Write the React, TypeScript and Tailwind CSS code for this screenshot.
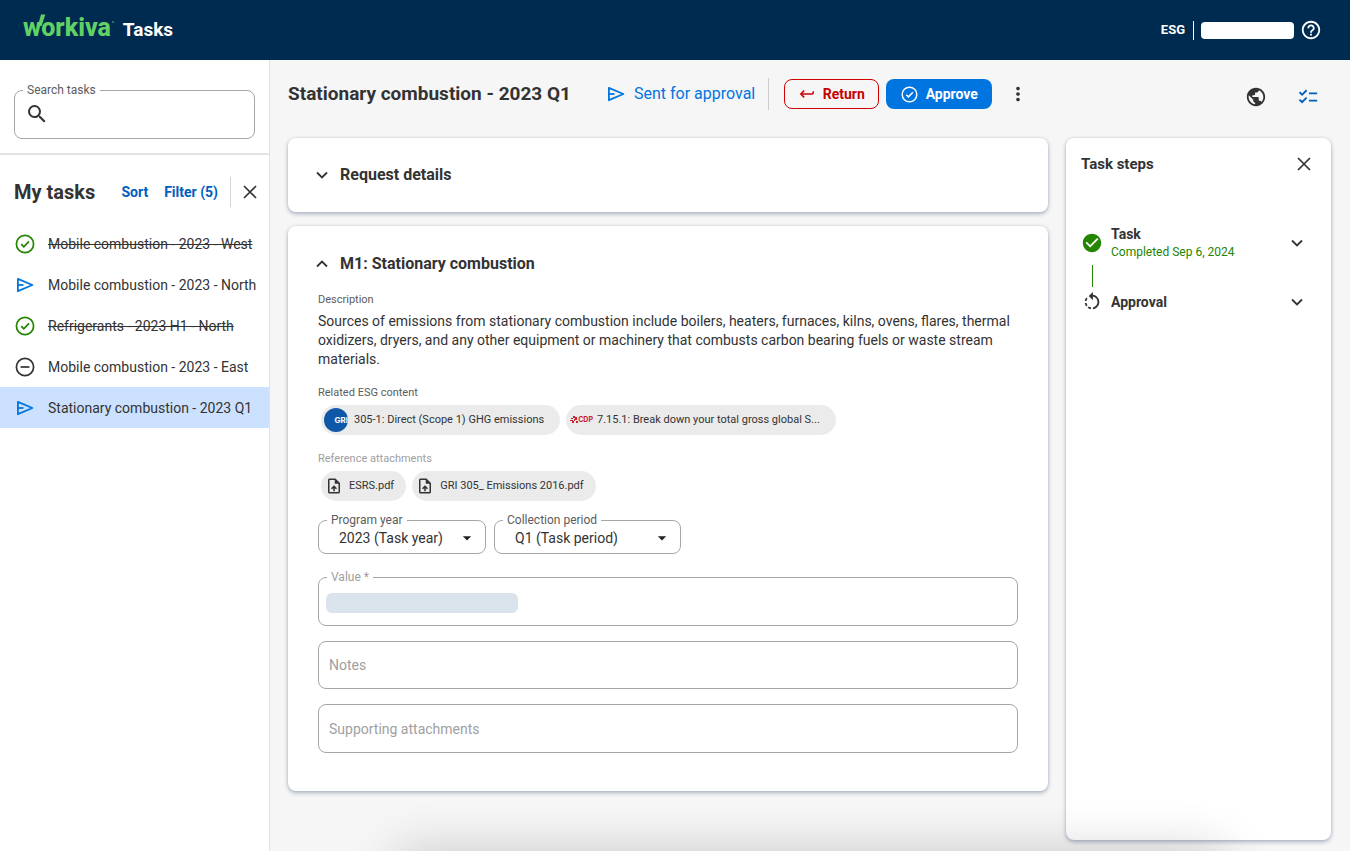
import classNames from "clsx";
import { type FC, type ReactNode, useState } from "react";
import {
	MdArrowDropDown,
	MdCheckCircle,
	MdChecklist,
	MdHelpOutline,
	MdMoreVert,
	MdPublic,
	MdRotateLeft,
	MdSearch,
	MdUploadFile,
} from "react-icons/md";

type Status = "DONE" | "SENT" | "SKIPPED";

type Task = {
	id: number;
	title: string;
	status: Status;
};

const tasks: Task[] = [
	{ id: 1, title: "Mobile combustion - 2023 - West", status: "DONE" },
	{ id: 2, title: "Mobile combustion - 2023 - North", status: "SENT" },
	{ id: 3, title: "Refrigerants - 2023 H1 - North", status: "DONE" },
	{ id: 4, title: "Mobile combustion - 2023 - East", status: "SKIPPED" },
	{ id: 5, title: "Stationary combustion - 2023 Q1", status: "SENT" },
];

const attachments = ["ESRS.pdf", "GRI 305_ Emissions 2016.pdf"];

type IconProps = { className?: string };

const CheckCircleIcon: FC<IconProps> = ({ className }) => (
	<svg viewBox="0 0 20 20" fill="none" stroke="currentColor" className={className} aria-hidden="true">
		<circle cx="10" cy="10" r="8.6" strokeWidth="1.7" />
		<path d="M6.2 10.2 8.8 12.8 14 7.4" strokeWidth="1.8" />
	</svg>
);

const MinusCircleIcon: FC<IconProps> = ({ className }) => (
	<svg viewBox="0 0 20 20" fill="none" stroke="currentColor" className={className} aria-hidden="true">
		<circle cx="10" cy="10" r="8.6" strokeWidth="1.7" />
		<path d="M5.6 10h8.8" strokeWidth="1.7" />
	</svg>
);

const SendIcon: FC<IconProps> = ({ className }) => (
	<svg viewBox="0 0 20 20" fill="none" stroke="currentColor" className={className} aria-hidden="true">
		<path d="M2.9 3.8 17.4 10 2.9 16.2Z" strokeWidth="1.8" strokeLinejoin="round" />
		<path d="M3 10h5.5" strokeWidth="1.8" />
	</svg>
);

const ReturnIcon: FC<IconProps> = ({ className }) => (
	<svg viewBox="0 0 16 16" fill="none" stroke="currentColor" strokeWidth="1.5" className={className} aria-hidden="true">
		<path d="M5.2 4.6 1.8 8l3.4 3.4" />
		<path d="M2 8h11.2a1 1 0 0 0 1-1V5.2" />
	</svg>
);

const CloseIcon: FC<IconProps> = ({ className }) => (
	<svg viewBox="0 0 14 14" fill="none" stroke="currentColor" strokeWidth="1.7" className={className} aria-hidden="true">
		<path d="m1 1 12 12M13 1 1 13" />
	</svg>
);

const ChevronIcon: FC<IconProps> = ({ className }) => (
	<svg viewBox="0 0 12 12" fill="none" stroke="currentColor" strokeWidth="1.8" className={className} aria-hidden="true">
		<path d="m1 3.5 5 5 5-5" />
	</svg>
);

const StatusIcon: FC<{ status: Status }> = ({ status }) => {
	if (status === "DONE") {
		return <CheckCircleIcon className="size-5 shrink-0 text-[#238500]" />;
	}
	if (status === "SENT") {
		return <SendIcon className="size-5 shrink-0 text-[#0075e0]" />;
	}
	return <MinusCircleIcon className="size-5 shrink-0 text-[#333333]" />;
};

const Logo: FC = () => (
	<span className="relative pb-1 font-extrabold text-[25px] text-[#62d165] leading-7 select-none">
		workiva
		<svg viewBox="0 0 96 28" className="absolute left-0 top-0 w-24 h-7" aria-hidden="true">
			<path d="M18 0.5H22.3L18.6 12H14.8Z" fill="currentColor" />
			<circle cx="90" cy="8" r="0.8" fill="currentColor" />
		</svg>
	</span>
);

const Card: FC<{ className?: string; children: ReactNode }> = ({
	className,
	children,
}) => (
	<section
		className={classNames(
			"rounded-lg bg-white shadow-[0_2px_4px_rgba(40,65,110,0.35),0_0_3px_rgba(40,65,110,0.15)]",
			className,
		)}
	>
		{children}
	</section>
);

const Chip: FC<{ className?: string; children: ReactNode }> = ({
	className,
	children,
}) => (
	<button
		type="button"
		className={classNames(
			"flex items-center h-[30px] rounded-full bg-[#ebebeb] text-[11px] text-[#333333] whitespace-nowrap",
			className,
		)}
	>
		{children}
	</button>
);

const OutlinedSelect: FC<{
	id: string;
	label: string;
	options: string[];
	className?: string;
}> = ({ id, label, options, className }) => (
	<fieldset
		className={classNames(
			"h-[42px] rounded-lg border border-[#a6a6a6]",
			className,
		)}
	>
		<legend className="ml-2 px-1 text-xs leading-4 text-[#5c5c5c]">
			<label htmlFor={id}>{label}</label>
		</legend>
		<div className="flex items-center pr-2">
			<select
				id={id}
				className="flex-1 min-w-0 appearance-none bg-transparent pl-5 text-sm leading-5 text-[#333333] outline-none"
			>
				{options.map((option) => (
					<option key={option}>{option}</option>
				))}
			</select>
			<MdArrowDropDown className="size-5 shrink-0 text-[#222222]" />
		</div>
	</fieldset>
);

const Header: FC = () => (
	<header className="flex items-center justify-between h-[60px] pl-[23px] pr-7 bg-[#002b50] text-white">
		<div className="flex items-center gap-3">
			<Logo />
			<h1 className="font-bold text-[19px] leading-7">Tasks</h1>
		</div>
		<div className="flex items-center">
			<span className="pr-2 font-bold text-[13px]">ESG</span>
			<span className="w-px h-[19px] bg-white" />
			<span className="ml-[7px] w-[93px] h-[17px] rounded bg-white" />
			<button type="button" aria-label="Help" className="ml-1.5">
				<MdHelpOutline className="size-[22px]" />
			</button>
		</div>
	</header>
);

const Sidebar: FC = () => {
	const [selected, setSelected] = useState(5);

	return (
		<aside className="w-[270px] shrink-0 bg-white border-r border-[#dfe3e8]">
			<div className="px-3.5 pt-[22px] pb-3.5 border-b-2 border-[#e4e4e4]">
				<fieldset className="h-[57px] rounded-lg border border-[#a6a6a6]">
					<legend className="ml-2 px-1 text-xs leading-4 text-[#5c5c5c]">
						<label htmlFor="search">Search tasks</label>
					</legend>
					<div className="flex items-center gap-2 px-2.5 pt-1">
						<MdSearch className="size-6 shrink-0 text-[#333333]" />
						<input
							id="search"
							type="text"
							className="flex-1 min-w-0 text-sm outline-none"
						/>
					</div>
				</fieldset>
			</div>
			<div className="flex items-center h-[68px] pt-1.5 pl-3.5 pr-3">
				<h2 className="flex-1 font-bold text-xl">My tasks</h2>
				<button type="button" className="font-bold text-sm text-[#005ebd]">
					Sort
				</button>
				<button type="button" className="ml-4 font-bold text-sm text-[#005ebd]">
					Filter (5)
				</button>
				<span className="ml-3 w-px h-[30px] bg-[#d6d6d6]" />
				<button type="button" aria-label="Close task list" className="ml-3">
					<CloseIcon className="size-3.5" />
				</button>
			</div>
			<ul>
				{tasks.map((task) => (
					<li key={task.id}>
						<button
							type="button"
							onClick={() => setSelected(task.id)}
							className={classNames(
								"flex items-center gap-[13px] w-full h-[41px] pl-[15px] text-left text-sm whitespace-nowrap",
								{
									"bg-[#cce1ff]": selected === task.id,
									"line-through": task.status === "DONE",
								},
							)}
						>
							<StatusIcon status={task.status} />
							{task.title}
						</button>
					</li>
				))}
			</ul>
		</aside>
	);
};

const TitleBar: FC = () => (
	<div className="flex items-center h-8">
		<h2 className="font-bold text-[19px] whitespace-nowrap">
			Stationary combustion - 2023 Q1
		</h2>
		<SendIcon className="ml-[35px] size-5 shrink-0 text-[#0075e0]" />
		<span className="ml-2 text-base text-[#0075e0] whitespace-nowrap">
			Sent for approval
		</span>
		<span className="ml-[13px] w-px h-8 bg-[#cccccc]" />
		<button
			type="button"
			className="flex items-center justify-center gap-2 ml-[15px] w-[95px] h-[30px] rounded-lg border border-[#d00000] font-bold text-sm text-[#c70000]"
		>
			<ReturnIcon className="size-4" />
			Return
		</button>
		<button
			type="button"
			className="flex items-center justify-center gap-2 ml-[7px] w-[106px] h-[30px] rounded-lg bg-[#0075e0] font-bold text-sm text-white"
		>
			<CheckCircleIcon className="size-[17px]" />
			Approve
		</button>
		<button type="button" aria-label="More actions" className="ml-[15px]">
			<MdMoreVert className="size-[22px]" />
		</button>
	</div>
);

const StationaryCombustion: FC = () => (
	<Card className="mt-3.5 px-[30px] pt-6 pb-[38px]">
		<button type="button" className="flex items-center gap-3 h-7 -ml-0.5">
			<ChevronIcon className="size-3 rotate-180" />
			<h3 className="font-bold text-base">M1: Stationary combustion</h3>
		</button>
		<h4 className="mt-3.5 text-[11px] leading-4 text-[#5c5c5c]">Description</h4>
		<p className="mt-1 text-sm leading-[19px]">
			Sources of emissions from stationary combustion include boilers, heaters,
			furnaces, kilns, ovens, flares, thermal oxidizers, dryers, and any other
			equipment or machinery that combusts carbon bearing fuels or waste stream
			materials.
		</p>
		<h4 className="mt-4 text-[11px] leading-4 text-[#5c5c5c]">
			Related ESG content
		</h4>
		<div className="flex gap-1.5 mt-1 ml-[3px]">
			<Chip className="pr-4">
				<span className="flex items-center justify-end ml-[3px] mr-1.5 size-6 rounded-full overflow-hidden bg-[#0f58a8] font-['Inter'] font-bold text-[8px] text-white">
					GRI
				</span>
				305-1: Direct (Scope 1) GHG emissions
			</Chip>
			<Chip className="pr-4">
				<span className="flex items-center ml-1 mr-1 font-['Inter'] font-bold text-[7px] text-[#c8202f]">
					<svg viewBox="0 0 8 8" className="size-2" fill="currentColor" aria-hidden="true">
						<path d="M1 2h2v1H1zM3 0h2v2H3zM5 1h2v3H5zM0 4h3v1H0zM4 3h1v2H4zM2 5h2v2H2zM6 5h2v2H6z" />
					</svg>
					CDP
				</span>
				7.15.1: Break down your total gross global S...
			</Chip>
		</div>
		<h4 className="mt-4 text-[11px] leading-4 text-[#a0a0a0]">
			Reference attachments
		</h4>
		<div className="flex gap-1.5 mt-1 ml-[3px]">
			{attachments.map((name) => (
				<Chip key={name} className="pr-3">
					<MdUploadFile className="ml-1 mr-1.5 size-[18px]" />
					{name}
				</Chip>
			))}
		</div>
		<div className="flex gap-2 mt-[11px]">
			<OutlinedSelect
				id="year"
				label="Program year"
				options={["2023 (Task year)"]}
				className="w-[168px]"
			/>
			<OutlinedSelect
				id="period"
				label="Collection period"
				options={["Q1 (Task period)"]}
				className="w-[187px]"
			/>
		</div>
		<fieldset className="mt-[15px] h-[57px] rounded-lg border border-[#a6a6a6]">
			<legend className="ml-2 px-1 text-xs leading-4 text-[#a0a0a0]">
				<label htmlFor="value">Value *</label>
			</legend>
			<div className="flex items-center px-[7px] pt-2">
				<span className="w-48 h-5 rounded-md bg-[#dbe3ed]" />
				<input
					id="value"
					type="text"
					className="flex-1 h-5 text-sm outline-none"
				/>
			</div>
		</fieldset>
		<input
			type="text"
			aria-label="Notes"
			placeholder="Notes"
			className="block mt-[15px] px-2.5 w-full h-12 rounded-lg border border-[#a6a6a6] text-sm placeholder:text-[#a0a0a0] outline-none"
		/>
		<input
			type="text"
			aria-label="Supporting attachments"
			placeholder="Supporting attachments"
			className="block mt-[15px] px-2.5 w-full h-[49px] rounded-lg border border-[#a6a6a6] text-sm placeholder:text-[#a0a0a0] outline-none"
		/>
	</Card>
);

const TaskSteps: FC = () => (
	<Card className="flex-1 pl-[15px] pr-5">
		<div className="flex items-center justify-between pt-4">
			<h3 className="font-bold text-[15px] leading-5">Task steps</h3>
			<button type="button" aria-label="Close task steps">
				<CloseIcon className="size-3.5" />
			</button>
		</div>
		<ol className="mt-[51px] pr-2">
			<li>
				<div className="flex items-center gap-2">
					<MdCheckCircle className="size-[22px] shrink-0 text-[#238500]" />
					<div className="flex-1">
						<h4 className="font-bold text-sm leading-[18px]">Task</h4>
						<p className="text-xs leading-[18px] text-[#238500]">
							Completed Sep 6, 2024
						</p>
					</div>
					<button type="button" aria-label="Show task step">
						<ChevronIcon className="size-3" />
					</button>
				</div>
				<span className="block ml-[11px] mt-1 w-px h-[22px] bg-[#238500]" />
			</li>
			<li className="flex items-center gap-2 mt-1">
				<MdRotateLeft className="size-[22px] shrink-0" />
				<h4 className="flex-1 font-bold text-sm leading-[22px]">Approval</h4>
				<button type="button" aria-label="Show approval step">
					<ChevronIcon className="size-3" />
				</button>
			</li>
		</ol>
	</Card>
);

const App: FC = () => (
	<div className="relative flex flex-col min-h-screen overflow-hidden bg-[#f6f6f6] font-['Roboto',sans-serif] text-[#333333]">
		<Header />
		<div className="flex flex-1">
			<Sidebar />
			<main className="flex flex-1 gap-[18px] min-w-0 pt-[18px] pl-[18px] pr-[19px] pb-[11px]">
				<div className="flex-1 min-w-0">
					<TitleBar />
					<Card className="mt-7 px-7">
						<button type="button" className="flex items-center gap-3 h-[74px]">
							<ChevronIcon className="size-3" />
							<h3 className="font-bold text-base">Request details</h3>
						</button>
					</Card>
					<StationaryCombustion />
				</div>
				<div className="flex flex-col w-[265px] shrink-0">
					<div className="flex justify-end gap-[30px] h-[60px] pt-2 pr-3">
						<button type="button" aria-label="Region" className="h-[22px]">
							<MdPublic className="size-[22px]" />
						</button>
						<button type="button" aria-label="Task steps" className="h-[22px]">
							<MdChecklist className="size-[22px] text-[#005ebd]" />
						</button>
					</div>
					<TaskSteps />
				</div>
			</main>
		</div>
		<div className="absolute top-full left-[29%] right-[9%] h-10 rounded-full shadow-[0_0_50px_rgba(0,0,0,0.2)]" />
	</div>
);

export default App;
